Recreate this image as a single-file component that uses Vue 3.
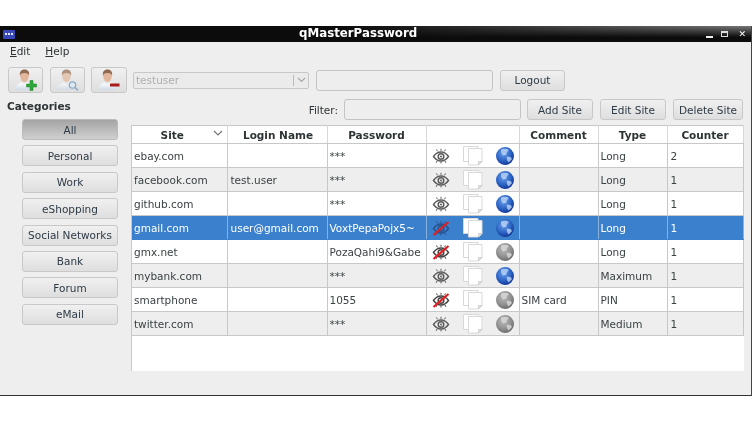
<script setup>
const categories = ['Personal', 'Work', 'eShopping', 'Social Networks', 'Bank', 'Forum', 'eMail']
const columns = [
  { name: 'Site', width: 95 }, { name: 'Login Name', width: 100 }, { name: 'Password', width: 99 },
  { name: '', width: 93 }, { name: 'Comment', width: 79 }, { name: 'Type', width: 69 }, { name: 'Counter', width: 76 }
]
const rows = [
  { site: 'ebay.com', login: '', pass: '***', comment: '', type: 'Long', counter: '2', shown: false, web: true },
  { site: 'facebook.com', login: 'test.user', pass: '***', comment: '', type: 'Long', counter: '1', shown: false, web: true },
  { site: 'github.com', login: '', pass: '***', comment: '', type: 'Long', counter: '1', shown: false, web: true },
  { site: 'gmail.com', login: 'user@gmail.com', pass: 'VoxtPepaPojx5~', comment: '', type: 'Long', counter: '1', shown: true, web: true, selected: true },
  { site: 'gmx.net', login: '', pass: 'PozaQahi9&Gabe', comment: '', type: 'Long', counter: '1', shown: true, web: false },
  { site: 'mybank.com', login: '', pass: '***', comment: '', type: 'Maximum', counter: '1', shown: false, web: true },
  { site: 'smartphone', login: '', pass: '1055', comment: 'SIM card', type: 'PIN', counter: '1', shown: true, web: false },
  { site: 'twitter.com', login: '', pass: '***', comment: '', type: 'Medium', counter: '1', shown: false, web: false }
]
</script>

<template>
  <div class="window">
    <svg class="defs" width="0" height="0" aria-hidden="true">
      <defs>
        <radialGradient id="blueGlobe" cx="42%" cy="35%" r="70%">
          <stop offset="0" stop-color="#6c9ce6" /><stop offset="0.55" stop-color="#2f68c8" /><stop offset="1" stop-color="#0e2f90" />
        </radialGradient>
        <radialGradient id="greyGlobe" cx="42%" cy="35%" r="70%">
          <stop offset="0" stop-color="#b8b8b8" /><stop offset="0.55" stop-color="#949494" /><stop offset="1" stop-color="#666" />
        </radialGradient>
        <linearGradient id="shirt" x1="0" y1="0" x2="0" y2="1">
          <stop offset="0" stop-color="#ffffff" /><stop offset="1" stop-color="#cfdae6" />
        </linearGradient>
        <symbol id="eye" viewBox="0 0 18 16">
          <path d="M1.500 8.500C4 5 6.500 4 9 4s5 1 7.500 4.500C14 12 11.500 13 9 13S4 12 1.500 8.500Z" fill="none" stroke="currentColor" stroke-width="1.400" />
          <circle cx="9" cy="8.500" r="2.800" fill="none" stroke="currentColor" stroke-width="1.500" />
          <circle cx="9" cy="8.500" r="1" fill="currentColor" />
          <path d="M9 .8v2M4.500 1.500l1 1.800M13.500 1.500l-1 1.800M9 13.500v2M5 13l-.8 1.800M13 13l.8 1.800" stroke="currentColor" stroke-width="1" fill="none" />
        </symbol>
        <symbol id="pages" viewBox="0 0 20 20">
          <path d="M.5.500h14.500v15H.5Z" fill="#fff" stroke="#d8d8d8" />
          <path d="M5.500 2.500h13.500v13l-3.500 3.500h-10Z" fill="#fff" stroke="#d8d8d8" />
          <path d="M19 15.500h-3.500v3.500Z" fill="#e6e6e6" stroke="#d0d0d0" />
        </symbol>
        <symbol id="globeBlue" viewBox="0 0 18 18">
          <circle cx="9" cy="9" r="9" fill="url(#blueGlobe)" />
          <path d="M5 2.500c2-1.200 6-1.200 8 .5l-2 2.200-1 2.800-3 .5-2-3ZM10.500 9.500l4 .5 1.500 2-3.500 3.500-1.500-2.500Z" fill="#b4cff4" opacity=".85" />
        </symbol>
        <symbol id="globeGrey" viewBox="0 0 18 18">
          <circle cx="9" cy="9" r="9" fill="url(#greyGlobe)" />
          <path d="M5 2.500c2-1.200 6-1.200 8 .5l-2 2.200-1 2.800-3 .5-2-3ZM10.500 9.500l4 .5 1.500 2-3.500 3.500-1.500-2.500Z" fill="#d6d6d6" opacity=".85" />
        </symbol>
        <symbol id="user" viewBox="0 0 24 24">
          <path d="M1.500 22c0-4.500 3.500-7 6-7.500l3 1.500 3-1.500c2.500.5 6 3 6 7.500Z" fill="url(#shirt)" />
          <ellipse cx="10.500" cy="8" rx="4.300" ry="6" fill="#e3b79c" />
          <path d="M6 8C5 3 8 1.500 10.500 1.500s5.500 1.500 4.500 6.500c-.4-2.300-1.500-3-4.500-3S6.400 5.700 6 8Z" fill="#8f6a50" />
        </symbol>
      </defs>
    </svg>

    <header class="titlebar">
      <span class="app-icon"><i></i><i></i><i></i></span>
      <span class="title">qMasterPassword</span>
      <span class="win-buttons">
        <span class="min"></span><span class="max"></span><span class="close">✕</span>
      </span>
    </header>

    <nav class="menu">
      <span class="menu-item"><u>E</u>dit</span>
      <span class="menu-item"><u>H</u>elp</span>
    </nav>

    <div class="toolbar">
      <button class="btn icon-btn">
        <svg width="24" height="24"><use href="#user" />
          <path d="M12.500 16h3.500v-3.500h3V16h3.500v3H19v3.500h-3V19h-3.500Z" fill="#2fa83a" stroke="#1c7c28" stroke-width=".5" /></svg>
      </button>
      <button class="btn icon-btn">
        <svg width="24" height="24"><use href="#user" opacity=".7" />
          <circle cx="16.500" cy="17" r="3.200" fill="#dce8f2" stroke="#8faac2" stroke-width="1.300" />
          <path d="M19 19.500l3 2.800" stroke="#8faac2" stroke-width="1.600" /></svg>
      </button>
      <button class="btn icon-btn wide">
        <svg width="24" height="24"><use href="#user" />
          <rect x="13" y="15.500" width="9.500" height="3" fill="#a81c1c" /></svg>
      </button>
      <div class="combo">
        <span class="combo-text">testuser</span>
        <span class="combo-arrow">
          <svg width="9" height="6"><path d="M1 1l3.500 3.500L8 1" fill="none" stroke="#a8a8a8" stroke-width="1.200" /></svg>
        </span>
      </div>
      <input class="field master" disabled />
      <button class="btn logout">Logout</button>
    </div>

    <div class="body">
      <aside class="sidebar">
        <h2 class="cat-title">Categories</h2>
        <div class="cat-list">
          <button class="btn cat active">All</button>
          <button v-for="c in categories" :key="c" class="btn cat">{{ c }}</button>
        </div>
      </aside>

      <main class="content">
        <div class="filter-row">
          <label class="filter-label">Filter:</label>
          <input class="field filter" disabled />
          <button class="btn site-btn">Add Site</button>
          <button class="btn site-btn">Edit Site</button>
          <button class="btn site-btn delete">Delete Site</button>
        </div>

        <div class="table-wrap">
          <table class="sites">
            <colgroup>
              <col v-for="c in columns" :key="c.name" :style="{ width: c.width + 'px' }" />
            </colgroup>
            <thead>
              <tr>
                <th v-for="(c, i) in columns" :key="c.name">
                  {{ c.name }}
                  <svg v-if="i === 0" class="sort" width="10" height="6"><path d="M1 1l4 4 4-4" fill="none" stroke="#777" stroke-width="1.200" /></svg>
                </th>
              </tr>
            </thead>
            <tbody>
              <tr v-for="r in rows" :key="r.site" :class="{ selected: r.selected }">
                <td>{{ r.site }}</td>
                <td>{{ r.login }}</td>
                <td>{{ r.pass }}</td>
                <td class="actions">
                  <div class="action-icons">
                    <span class="eye-wrap">
                      <svg width="18" height="16" class="eye" :class="{ dim: r.shown }"><use href="#eye" /></svg>
                      <svg v-if="r.shown" width="18" height="16" class="slash"><path d="M1.500 15L16.500 2" stroke="#e02020" stroke-width="2.200" /></svg>
                    </span>
                    <svg width="20" height="20"><use href="#pages" /></svg>
                    <svg width="18" height="18"><use :href="r.web ? '#globeBlue' : '#globeGrey'" /></svg>
                  </div>
                </td>
                <td>{{ r.comment }}</td>
                <td>{{ r.type }}</td>
                <td>{{ r.counter }}</td>
              </tr>
            </tbody>
          </table>
        </div>
      </main>
    </div>
  </div>
</template>

<style>
html, body { margin: 0; background: #fff; }
</style>

<style scoped>
.defs { position: absolute; }
.window {
  margin-top: 26px; height: 370px; box-sizing: border-box; background: #eee;
  border-bottom: 1px solid #333; border-right: 1px solid #444;
  font-family: "DejaVu Sans", sans-serif; font-size: 10.500px; color: #2e3436;
  display: flex; flex-direction: column; overflow: hidden; filter: blur(.3px);
}
.titlebar {
  height: 16px; flex: none; display: flex; align-items: center; justify-content: space-between; padding: 0 3px;
  background: linear-gradient(180deg, rgba(0,0,0,0) 0, #0c0c0c 70%) , linear-gradient(90deg, #0c0c0c 0, #0c0c0c 45%, #777 100%);
  position: relative;
}
.app-icon { width: 12px; height: 9px; background: #3848b8; border-radius: 1px; display: flex; align-items: center; justify-content: center; gap: 1px; }
.app-icon i { width: 2px; height: 2px; background: #e8e8ff; }
.title {
  position: absolute; left: 299px; top: -1px; color: #fff; font-weight: 700; font-size: 11.800px; line-height: 16px;
}
.win-buttons { display: flex; align-items: center; gap: 8px; color: #fff; padding-right: 2px; }
.min { width: 7px; height: 2px; background: #eee; margin-top: 6px; }
.max { width: 7px; height: 6px; border: 1px solid #ddd; border-top-width: 2px; box-sizing: border-box; }
.close { font-size: 9px; font-weight: 900; line-height: 10px; margin-left: 2px; }
.menu { height: 20px; flex: none; display: flex; align-items: center; gap: 15px; padding-left: 10px; margin-top: -1px; }
.toolbar { flex: none; display: flex; align-items: center; margin-top: 6px; padding-left: 8px; height: 26px; }
.btn {
  font: inherit; color: #2e3a46; box-sizing: border-box; padding: 0; border: 1px solid #c8c8c8; border-radius: 3px;
  background: linear-gradient(#f0f0f0, #dedede); display: flex; align-items: center; justify-content: center;
}
.icon-btn { width: 35px; height: 26px; margin-right: 7px; }
.icon-btn:nth-child(2) { margin-right: 6px; }
.wide { width: 36px; margin-right: 6px; }
.combo {
  width: 176px; height: 17px; box-sizing: border-box; border: 1px solid #c8c8c8; border-radius: 2px;
  display: flex; align-items: center; justify-content: space-between; color: #aeaeae; padding-left: 2px; background: #ebebeb;
}
.combo-arrow { width: 14px; height: 11px; border-left: 1px solid #bbb; display: flex; align-items: center; justify-content: center; }
.field { box-sizing: border-box; border: 1px solid #c4c4c4; border-radius: 3px; background: #eee; padding: 0; height: 21px; }
.master { width: 177px; margin-left: 7px; }
.logout { width: 65px; height: 21px; margin-left: 7px; }
.body { flex: 1; display: flex; min-height: 0; }
.sidebar { width: 131px; flex: none; }
.cat-title { margin: 6px 0 0 7px; font-size: 10.500px; line-height: 14px; height: 14px; font-weight: 700; }
.cat-list { margin: 6px 0 0 22px; display: flex; flex-direction: column; gap: 5.400px; }
.cat { width: 96px; height: 21px; }
.active { background: linear-gradient(#a4a4a4, #d0d0d0); border-color: #bbb; }
.content { flex: 1; min-width: 0; }
.filter-row { display: flex; align-items: center; justify-content: flex-end; margin-top: 6px; padding-right: 8px; height: 21px; }
.filter-label { margin-right: 6px; }
.filter { width: 177px; margin-right: 6px; }
.site-btn { width: 66px; height: 21px; margin-right: 7px; }
.delete { width: 70px; margin-right: 0; }
.table-wrap { margin: 5px 7px 0 0; height: 246px; background: #fff; border-left: 1px solid #c8c8c8; box-sizing: border-box; }
.sites { border-collapse: collapse; table-layout: fixed; width: 611px; }
.sites th {
  height: 17px; padding: 0; font-size: 10.500px; font-weight: 700; text-align: center; position: relative;
  border-top: 1px solid #c8c8c8; border-bottom: 1px solid #c8c8c8; border-right: 1px solid #d8d8d8; color: #2e3436; background: #fff;
}
.sites th:first-child { padding-right: 14px; }
.sites th:nth-child(2) { padding-left: 2px; }
.sites td { height: 23px; padding: 0 0 0 2px; border-right: 1px solid #c8c8c8; border-bottom: 1px solid #c8c8c8; white-space: nowrap; overflow: hidden; color: #3a4244; }
.sites td:nth-child(2), .sites td:nth-child(7) { padding-left: 3px; }
.sites tbody tr:nth-child(even) td { background: #eee; }
.sites tbody tr.selected td { background: #3a80cc; color: #fff; border-right-color: #8ab0dc; border-bottom-color: #3a80cc; }
.sort { position: absolute; left: 81px; top: 4px; }
.action-icons { display: flex; align-items: center; gap: 13px; padding-left: 5px; }
.eye-wrap { position: relative; width: 18px; height: 16px; }
.eye { color: #5a5a5a; display: block; }
.eye.dim { color: #444; }
.slash { position: absolute; left: 0; top: 0; }
.selected .eye { color: #28508c; }
td.actions { padding: 0; }
</style>
